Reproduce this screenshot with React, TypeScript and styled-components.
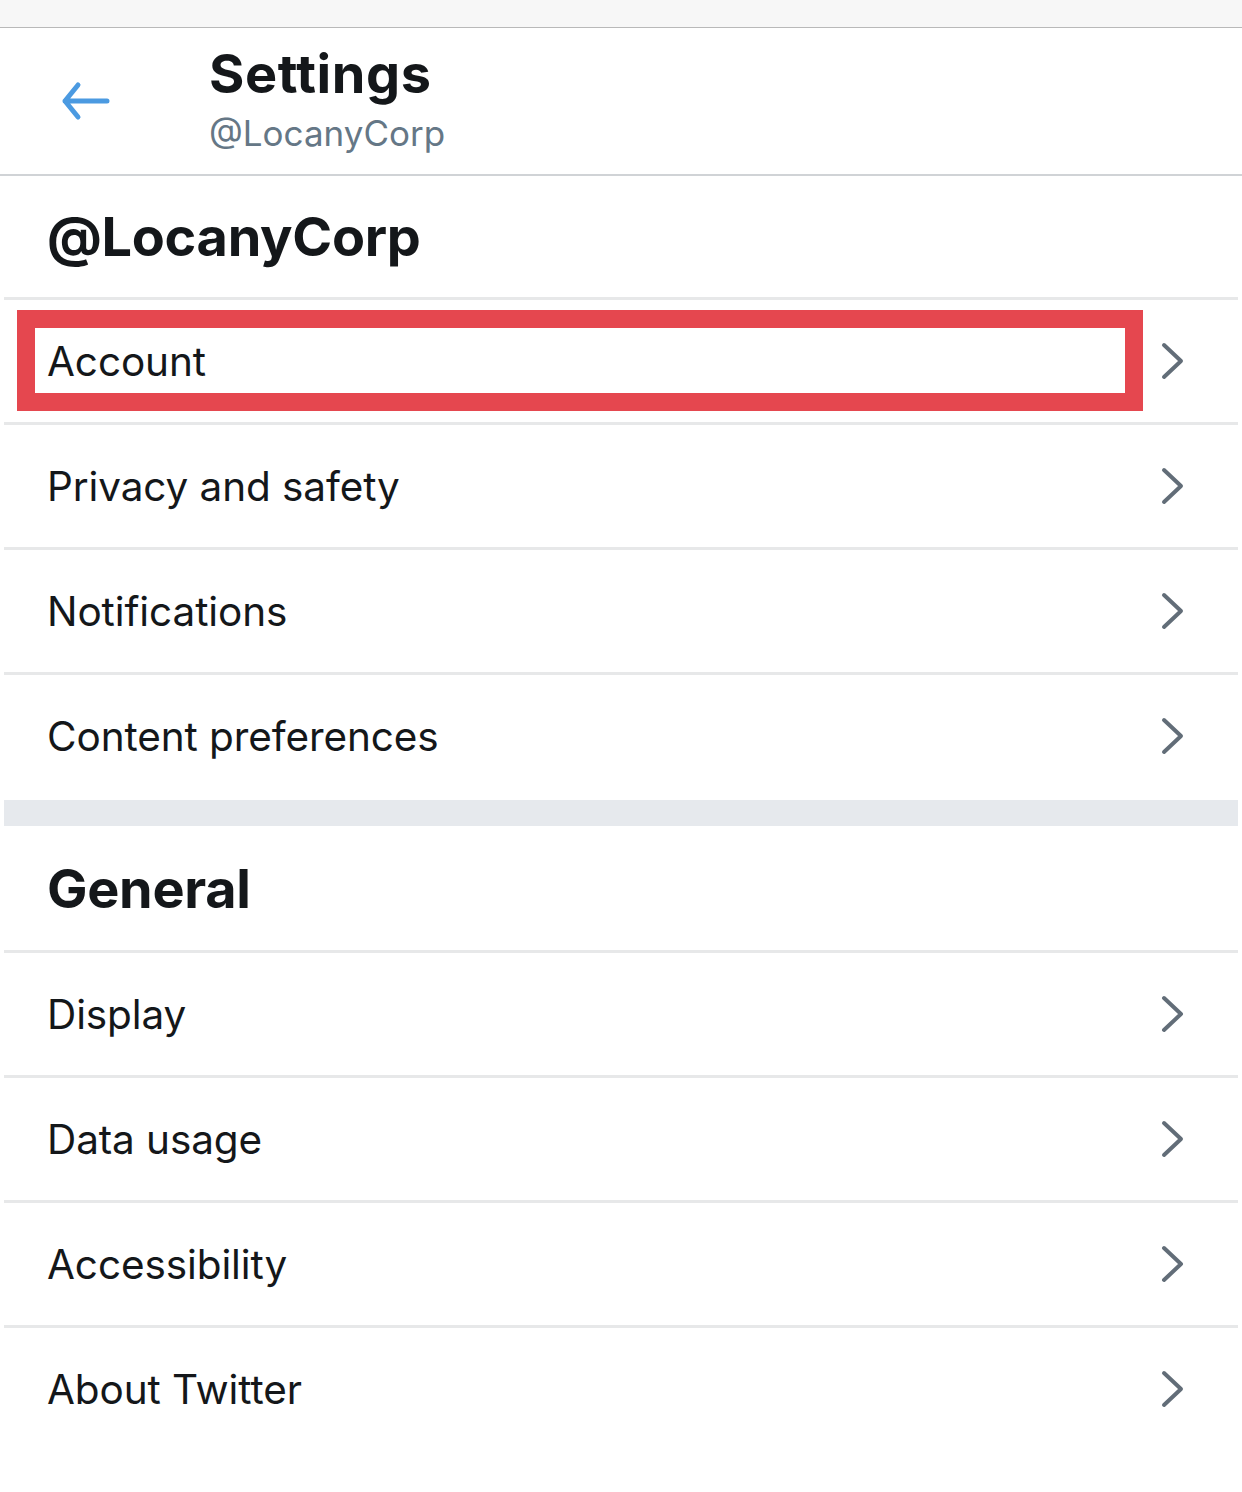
import React from "react";
import styled, { createGlobalStyle } from "styled-components";

const Global = createGlobalStyle`
  html, body { margin: 0; padding: 0; background: #ffffff; }
  body { font-family: Inter, "Noto Sans", "Liberation Sans", sans-serif; color: #14171a; }
`;

const Page = styled.div`
  width: 1242px;
  min-height: 1492px;
  background: #ffffff;
`;

const StatusStrip = styled.div`
  height: 27px;
  background: #f7f7f7;
  border-bottom: 1px solid #b9b9b9;
`;

const Header = styled.header`
  height: 146px;
  display: flex;
  align-items: center;
  border-bottom: 2px solid #d0d3d6;
`;

const BackButton = styled.div`
  width: 209px;
  display: flex;
  justify-content: flex-start;
  padding-left: 61px;
  box-sizing: border-box;
`;

const TitleBlock = styled.div`
  display: flex;
  flex-direction: column;
`;

const Title = styled.div`
  font-size: 54px;
  font-weight: 700;
  line-height: 56px;
  letter-spacing: 0.6px;
  color: #14171a;
`;

const Subtitle = styled.div`
  margin-top: 8px;
  font-size: 35px;
  line-height: 46px;
  color: #657786;
  letter-spacing: 0px;
`;

const List = styled.div`
  padding: 0 4px;
`;

const SectionTitle = styled.div<{ $h: number }>`
  height: ${(p) => p.$h}px;
  display: flex;
  align-items: center;
  padding-left: 43px;
  font-size: 54px;
  font-weight: 700;
  letter-spacing: -0.3px;
  border-bottom: 3px solid #e7e8e9;
`;

const Row = styled.div<{ $last?: boolean }>`
  position: relative;
  height: 122px;
  display: flex;
  align-items: center;
  justify-content: space-between;
  padding: 0 52px 0 43px;
  border-bottom: 3px solid ${(p) => (p.$last ? "transparent" : "#e7e8e9")};
`;

const RowLabel = styled.span`
  font-size: 40.5px;
  font-weight: 400;
  letter-spacing: -0.1px;
  color: #14171a;
`;

const Band = styled.div`
  height: 26px;
  background: #e6e9ed;
`;

const Highlight = styled.div`
  position: absolute;
  left: 13px;
  top: 10px;
  width: 1126px;
  height: 101px;
  box-sizing: border-box;
  border: 18px solid #e5474f;
  pointer-events: none;
`;

const Chevron = () => (
  <svg width="26" height="40" viewBox="0 0 26 40" fill="none">
    <path d="M4 4 L21 20 L4 36" stroke="#626d78" strokeWidth="4" strokeLinecap="round" strokeLinejoin="round" />
  </svg>
);

const BackArrow = () => (
  <svg width="50" height="40" viewBox="0 0 50 40" fill="none">
    <path d="M4 20 H46 M17 4 L4 20 L17 36" stroke="#4b9ae1" strokeWidth="5" strokeLinecap="round" strokeLinejoin="round" />
  </svg>
);

const accountRows = ["Account", "Privacy and safety", "Notifications", "Content preferences"];
const generalRows = ["Display", "Data usage", "Accessibility", "About Twitter"];

export default function App() {
  return (
    <Page>
      <Global />
      <StatusStrip />
      <Header>
        <BackButton>
          <BackArrow />
        </BackButton>
        <TitleBlock>
          <Title>Settings</Title>
          <Subtitle>@LocanyCorp</Subtitle>
        </TitleBlock>
      </Header>
      <List>
        <SectionTitle $h={121}>@LocanyCorp</SectionTitle>
        {accountRows.map((r, i) => (
          <Row key={r} $last={i === accountRows.length - 1}>
            <RowLabel>{r}</RowLabel>
            <Chevron />
            {i === 0 && <Highlight />}
          </Row>
        ))}
        <Band />
        <SectionTitle $h={124}>General</SectionTitle>
        {generalRows.map((r, i) => (
          <Row key={r} $last={i === generalRows.length - 1}>
            <RowLabel>{r}</RowLabel>
            <Chevron />
          </Row>
        ))}
      </List>
    </Page>
  );
}
